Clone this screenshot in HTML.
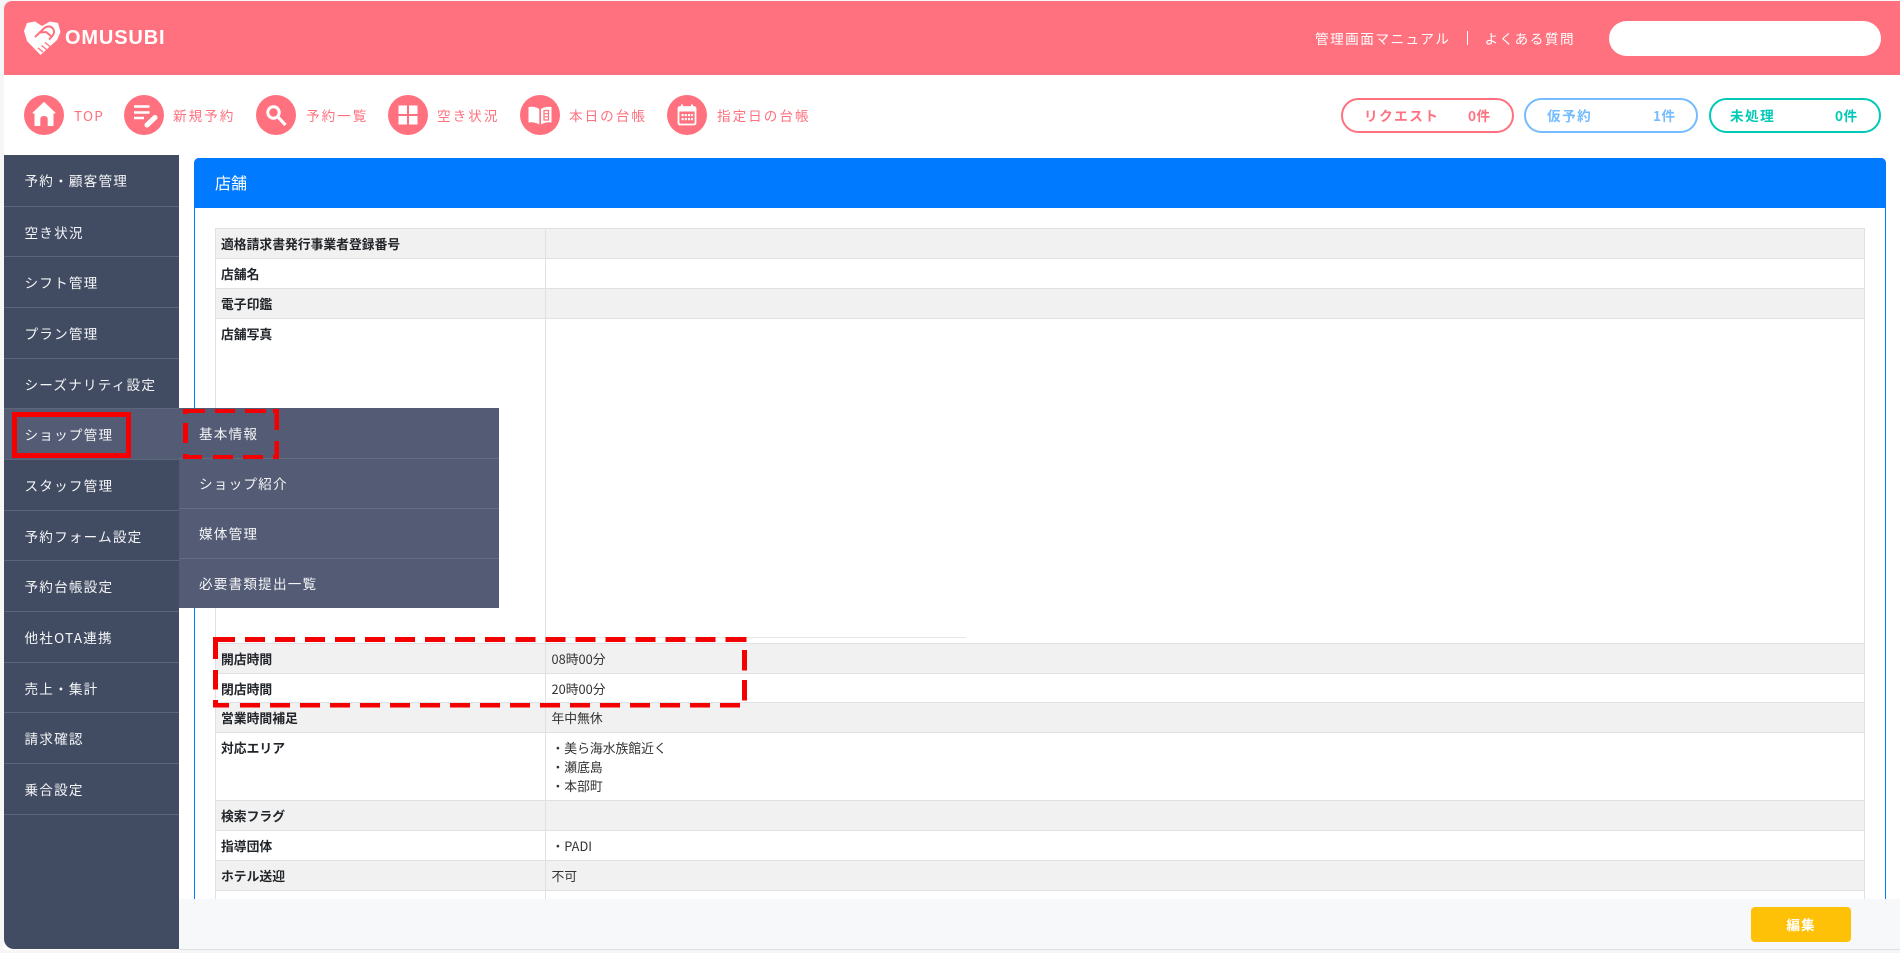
<!DOCTYPE html>
<html lang="ja"><head><meta charset="utf-8"><title>OMUSUBI</title>
<style>
*{box-sizing:border-box}
html,body{margin:0;padding:0;width:1900px;height:953px;overflow:hidden;background:#f6f6f6}
body{font-family:"Noto Sans CJK JP","Liberation Sans",sans-serif;color:#212529;position:relative}
.a{position:absolute;white-space:nowrap}
#head{left:4px;top:1px;width:1896px;height:74px;background:#ff717e;border-top-left-radius:8px}
#white{left:4px;top:75px;width:1896px;height:878px;background:#fff}
.nt{font-size:13.6px;letter-spacing:2px;color:#ff717e;font-weight:400;line-height:20px;top:105px}
.ic{top:95px;width:40px;height:40px}
.lk{font-size:13.6px;letter-spacing:1.5px;color:#fff;line-height:20px;top:28px}
.bd{top:98px;height:35px;border:2px solid;border-radius:18px;background:#fff}
.bt{top:105px;font-size:13.6px;letter-spacing:1.5px;font-weight:700;line-height:20px}
#side{left:4px;top:155px;width:175px;height:794px;background:#414b62;border-bottom-left-radius:10px}
.si{left:4px;width:175px;height:50.67px;border-bottom:1px solid #5c6579;color:#f4f5f7;font-size:13.6px;letter-spacing:1.2px;line-height:50px;padding-left:20.5px}
.su{left:179px;width:320px;height:50px;border-bottom:1px solid #646c82;background:#535c74;color:#f4f5f7;font-size:13.6px;letter-spacing:1.2px;line-height:49px;padding-left:20px}
#card{left:194px;top:158px;width:1692px;height:741px;background:#fff;border:1px solid #007bff;border-bottom:0;border-radius:5px 5px 0 0}
#chead{left:194px;top:158px;width:1692px;height:49.5px;background:#007bff;color:#fff;border-radius:5px 5px 0 0;font-size:16px;line-height:49px;padding-left:21px}
.r{left:215px;width:1650px;border:1px solid #dee2e6;border-top:0;font-size:12.8px;line-height:19.2px}
.r.g{background:#f1f1f1}
.r b{position:absolute;left:5px;top:4.5px;font-weight:700;color:#212529}
.r i{position:absolute;left:335.5px;top:4.5px;font-style:normal;color:#333}
.r u{position:absolute;left:329px;top:0;bottom:0;width:1px;background:#dee2e6}
#foot{left:179px;top:899px;width:1721px;height:50px;background:#f7f8fa}
#fline{left:179px;top:949px;width:1721px;height:1px;background:#dcdfe3}
#fbot{left:0;top:950px;width:1900px;height:3px;background:#f6f6f6}
#edit{left:1751px;top:907px;width:100px;height:35px;background:#ffc107;border-radius:4px;color:#fff;font-weight:700;font-size:13.6px;letter-spacing:1px;line-height:35px;text-align:center}
#logo{left:65px;top:26px;font-family:"Liberation Sans",sans-serif;font-size:20px;font-weight:700;color:#fff;letter-spacing:.85px;line-height:24px}
</style></head><body>
<div class="a" id="white"></div>
<div class="a" id="head"></div>

<svg class="a" style="left:24px;top:21px" width="37" height="35" viewBox="0 0 37 35">
<path d="M3 2 L11 0.5 L18 5 L26 0.5 L34 2 L36.5 11 L33 19 L16.5 34 L3 20 L0 10 Z" fill="#fff"/>
<path d="M11 16 L21 6.5 Q26 4 29 7.5 Q31.5 11.5 28 15.5 L25 18.5 M15 11.5 L22 11 L27 15" fill="none" stroke="#ff717e" stroke-width="2"/>
<path d="M14 27 L19 31 M17.5 24.5 L22.5 28.5 M21 21.5 L26 25.5" fill="none" stroke="#ff717e" stroke-width="1.4"/>
</svg>
<div class="a" id="logo">OMUSUBI</div>

<div class="a lk" style="left:1315px">管理画面マニュアル</div>
<div class="a" style="left:1467px;top:31px;width:1px;height:14px;background:#fff"></div>
<div class="a lk" style="left:1484.5px">よくある質問</div>
<div class="a" style="left:1609px;top:21px;width:272px;height:35px;background:#fff;border-radius:18px"></div>

<svg class="a ic" style="left:24px" viewBox="0 0 40 40"><circle cx="20" cy="20" r="20" fill="#ff717e"/><path d="M20 7.5 L31 18 H29 V30.5 H24.2 V24 Q24.2 20.5 20 20.5 Q15.8 20.5 15.8 24 V30.5 H11 V18 H9 Z" fill="#fff" stroke="#fff" stroke-linejoin="round"/></svg>
<div class="a nt" style="left:74px;letter-spacing:1.2px">TOP</div>
<svg class="a ic" style="left:124px" viewBox="0 0 40 40"><circle cx="20" cy="20" r="20" fill="#ff717e"/><path d="M10 11.5 H25.5 M10 17.5 H25.5 M10 23 H20" stroke="#fff" stroke-width="2.6" fill="none"/><path d="M23 30 L31 22.5" stroke="#fff" stroke-width="5" stroke-linecap="round"/></svg>
<div class="a nt" style="left:173px">新規予約</div>
<svg class="a ic" style="left:256px" viewBox="0 0 40 40"><circle cx="20" cy="20" r="20" fill="#ff717e"/><circle cx="17.5" cy="17.5" r="5.7" fill="none" stroke="#fff" stroke-width="3"/><path d="M21.8 21.8 L29.5 30" stroke="#fff" stroke-width="3.2" fill="none"/></svg>
<div class="a nt" style="left:306px">予約一覧</div>
<svg class="a ic" style="left:388px" viewBox="0 0 40 40"><circle cx="20" cy="20" r="20" fill="#ff717e"/><path d="M10.5 10.5 H19 V19 H10.5Z M21 10.5 H29.5 V19 H21Z M10.5 21 H19 V29.5 H10.5Z M21 21 H29.5 V29.5 H21Z" fill="#fff"/></svg>
<div class="a nt" style="left:437px">空き状況</div>
<svg class="a ic" style="left:520px" viewBox="0 0 40 40"><circle cx="20" cy="20" r="20" fill="#ff717e"/><path d="M8.5 12 Q15 11 19.3 14 V29.5 Q14 26.5 8.5 27.5 Z" fill="#fff"/><path d="M21 14 Q25.5 11 31.5 12 V27.5 Q26 26.5 21 29.5 Z" fill="#fff"/><path d="M24 15.5 H28.5 V25 H24 Z M24 18.7 H28.5 M24 21.8 H28.5" fill="none" stroke="#ff717e" stroke-width="1.2"/></svg>
<div class="a nt" style="left:569px">本日の台帳</div>
<svg class="a ic" style="left:667px" viewBox="0 0 40 40"><circle cx="20" cy="20" r="20" fill="#ff717e"/><rect x="11.5" y="12" width="17" height="17.5" rx="1.5" fill="none" stroke="#fff" stroke-width="1.8"/><rect x="11.5" y="12" width="17" height="4.5" fill="#fff"/><rect x="14" y="9.5" width="2" height="3" fill="#fff"/><rect x="24" y="9.5" width="2" height="3" fill="#fff"/><path d="M14.5 19h2.2v2.2h-2.2zM17.7 19h2.2v2.2h-2.2zM20.9 19h2.2v2.2h-2.2zM24.1 19h1.8v2.2h-1.8zM14.5 23h2.2v2.2h-2.2zM17.7 23h2.2v2.2h-2.2zM20.9 23h2.2v2.2h-2.2zM24.1 23h1.8v2.2h-1.8z" fill="#fff"/></svg>
<div class="a nt" style="left:717px">指定日の台帳</div>

<div class="a bd" style="left:1341px;width:173px;border-color:#ff717e"></div>
<div class="a bt" style="left:1364px;color:#ff717e">リクエスト</div>
<div class="a bt" style="left:1468px;color:#ff717e;letter-spacing:.5px">0件</div>
<div class="a bd" style="left:1524px;width:174px;border-color:#74bcff"></div>
<div class="a bt" style="left:1547px;color:#74bcff">仮予約</div>
<div class="a bt" style="left:1653px;color:#74bcff;letter-spacing:.5px">1件</div>
<div class="a bd" style="left:1708.5px;width:172.5px;border-color:#00c9b7"></div>
<div class="a bt" style="left:1730px;color:#00c9b7">未処理</div>
<div class="a bt" style="left:1835px;color:#00c9b7;letter-spacing:.5px">0件</div>

<div class="a" id="card"></div>
<div class="a" id="chead">店舗</div>

<div class="a r g" style="top:228px;height:31px;border-top:1px solid #dee2e6"><b>適格請求書発行事業者登録番号</b><u></u></div>
<div class="a r" style="top:259px;height:30px"><b>店舗名</b><u></u></div>
<div class="a r g" style="top:289px;height:30px"><b>電子印鑑</b><u></u></div>
<div class="a r" style="top:319px;height:325px"><b>店舗写真</b><u></u></div>
<div class="a" style="left:545px;top:636.5px;width:421px;height:1px;background:#e4e6e9"></div>
<div class="a r g" style="top:644px;height:30px"><b>開店時間</b><u></u><i>08時00分</i></div>
<div class="a r" style="top:674px;height:29px"><b>閉店時間</b><u></u><i>20時00分</i></div>
<div class="a r g" style="top:703px;height:30px"><b>営業時間補足</b><u></u><i>年中無休</i></div>
<div class="a r" style="top:733px;height:68px"><b>対応エリア</b><u></u><i>・美ら海水族館近く<br>・瀬底島<br>・本部町</i></div>
<div class="a r g" style="top:801px;height:30px"><b>検索フラグ</b><u></u></div>
<div class="a r" style="top:831px;height:30px"><b>指導団体</b><u></u><i>・PADI</i></div>
<div class="a r g" style="top:861px;height:30px"><b>ホテル送迎</b><u></u><i>不可</i></div>
<div class="a r" style="top:891px;height:30px"><u></u></div>

<div class="a" id="foot"></div>
<div class="a" id="fline"></div>
<div class="a" id="fbot"></div>
<div class="a" id="edit">編集</div>

<div class="a" id="side"></div>
<div class="a si" style="top:155px;height:51.67px">予約・顧客管理</div>
<div class="a si" style="top:206.7px">空き状況</div>
<div class="a si" style="top:257.3px">シフト管理</div>
<div class="a si" style="top:308px">プラン管理</div>
<div class="a si" style="top:358.7px">シーズナリティ設定</div>
<div class="a si" style="top:409.3px;background:#535c74">ショップ管理</div>
<div class="a si" style="top:460px">スタッフ管理</div>
<div class="a si" style="top:510.7px">予約フォーム設定</div>
<div class="a si" style="top:561.3px">予約台帳設定</div>
<div class="a si" style="top:612px">他社OTA連携</div>
<div class="a si" style="top:662.7px">売上・集計</div>
<div class="a si" style="top:713.3px">請求確認</div>
<div class="a si" style="top:764px">乗合設定</div>

<div class="a su" style="top:408px;height:51px;line-height:50px">基本情報</div>
<div class="a su" style="top:459px">ショップ紹介</div>
<div class="a su" style="top:509px">媒体管理</div>
<div class="a su" style="top:559px;border-bottom:0;height:49px">必要書類提出一覧</div>

<svg class="a" style="left:0;top:0" width="1900" height="953" fill="#f50000">
<!-- solid box -->
<path d="M12 412 H131 V458 H12 Z M17 417 V453 H126 V417 Z" fill-rule="evenodd" fill="#f50000"/>
<!-- small dashed box -->
<rect x="183" y="409" width="22" height="4"/><rect x="215" y="409" width="20" height="4"/><rect x="245" y="409" width="21" height="4"/><rect x="273" y="409" width="6" height="4"/>
<rect x="274.5" y="409" width="4.5" height="21"/><rect x="274.5" y="441" width="4.5" height="18"/>
<rect x="183" y="409" width="5" height="5"/><rect x="183" y="423" width="5" height="20"/><rect x="183" y="454" width="5" height="5"/>
<rect x="183" y="455" width="19" height="4"/><rect x="213" y="455" width="20" height="4"/><rect x="243" y="455" width="20" height="4"/><rect x="273" y="455" width="6" height="4"/>
<!-- large dashed box -->
<rect x="213" y="637" width="22" height="5"/><rect x="245" y="637" width="20" height="5"/><rect x="275" y="637" width="20" height="5"/><rect x="305" y="637" width="20" height="5"/><rect x="335" y="637" width="20" height="5"/><rect x="365" y="637" width="20" height="5"/><rect x="395" y="637" width="20" height="5"/><rect x="425" y="637" width="20" height="5"/><rect x="455" y="637" width="20" height="5"/><rect x="485" y="637" width="20" height="5"/><rect x="515.5" y="637" width="20" height="5"/><rect x="545.5" y="637" width="20" height="5"/><rect x="575.5" y="637" width="20" height="5"/><rect x="605.5" y="637" width="20" height="5"/><rect x="635.5" y="637" width="20" height="5"/><rect x="665.5" y="637" width="20" height="5"/><rect x="695.5" y="637" width="20" height="5"/><rect x="725.5" y="637" width="21" height="5"/>
<rect x="213" y="640" width="5" height="19"/><rect x="213" y="670" width="5" height="19.5"/><rect x="213" y="700" width="5" height="7.5"/>
<rect x="742" y="650" width="5" height="20.5"/><rect x="742" y="680" width="5" height="20.5"/>
<rect x="213" y="703" width="16" height="4.5"/><rect x="240" y="703" width="20" height="4.5"/><rect x="270" y="703" width="20" height="4.5"/><rect x="300" y="703" width="20" height="4.5"/><rect x="330" y="703" width="20" height="4.5"/><rect x="360" y="703" width="20" height="4.5"/><rect x="390" y="703" width="20" height="4.5"/><rect x="420" y="703" width="20" height="4.5"/><rect x="450" y="703" width="20" height="4.5"/><rect x="480" y="703" width="20" height="4.5"/><rect x="510" y="703" width="20" height="4.5"/><rect x="540" y="703" width="20" height="4.5"/><rect x="570" y="703" width="20" height="4.5"/><rect x="600" y="703" width="20" height="4.5"/><rect x="630" y="703" width="20" height="4.5"/><rect x="660" y="703" width="20" height="4.5"/><rect x="690" y="703" width="20" height="4.5"/><rect x="720" y="703" width="20" height="4.5"/>
</svg>
</body></html>
